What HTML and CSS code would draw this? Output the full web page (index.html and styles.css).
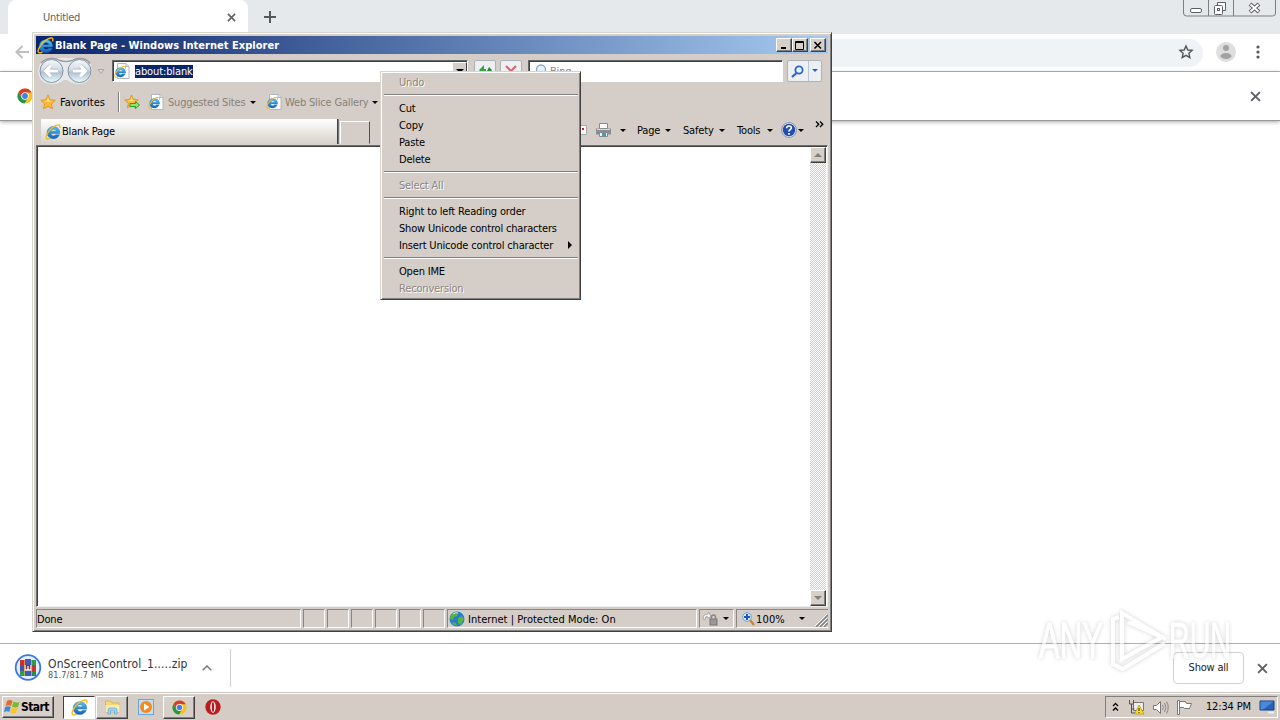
FILE: index.html
```html
<!DOCTYPE html>
<html lang="en">
<head>
    <meta charset="UTF-8">
    <meta name="viewport" content="width=device-width, initial-scale=1.0">
    <title>Untitled</title>
    <link rel="stylesheet" href="styles.css">
</head>
<body>
    <!-- shared icons -->
    <svg class="defs" width="0" height="0">
        <defs>
            <linearGradient id="blueE" x1="0" y1="0" x2="0" y2="1">
                <stop offset="0" stop-color="#5cc4f4"/><stop offset="1" stop-color="#0a62bc"/>
            </linearGradient>
            <linearGradient id="orb" x1="0" y1="0" x2="0" y2="1">
                <stop offset="0" stop-color="#f6f8fa"/><stop offset=".45" stop-color="#d3dce5"/>
                <stop offset=".55" stop-color="#b3c2cf"/><stop offset="1" stop-color="#e6fbff"/>
            </linearGradient>
            <symbol id="ie" viewBox="0 0 16 16">
                <path d="M14.800 9.500H6c.2 1.500 1.200 2.300 2.600 2.300 1 0 1.800-.4 2.300-1.100h3.500c-1 2.500-3.100 4-5.900 4-3.800 0-6.400-2.600-6.400-6.100s2.600-6.100 6.400-6.100c3.900 0 6.500 2.700 6.300 7zM6 7.200h5.200C10.900 6 10 5.300 8.600 5.300S6.300 6 6 7.200z" fill="url(#blueE)" stroke="#1768b0" stroke-width=".4"/>
                <path d="M14.600 4.200c.9-2.200.3-3.500-1.500-3.300-2.800.3-6.800 3.200-9.600 7-2.400 3.300-3.200 6.200-1.700 6.900.9.400 2.100.1 3.300-.6" fill="none" stroke="#f3b91f" stroke-width="1.300"/>
            </symbol>
            <symbol id="iepage" viewBox="0 0 16 16">
                <path d="M3.500.5h8.500l3 3v12H3.500z" fill="#fff" stroke="#b1b5bd"/>
                <path d="M12 .5v3h3" fill="#dde3ea" stroke="#b1b5bd"/>
                <use href="#ie" x="0" y="2.500" width="12.500" height="12.500"/>
            </symbol>
            <symbol id="star" viewBox="0 0 16 16">
                <path d="M8 1l2.100 4.700 5.100.6-3.800 3.500 1 5L8 12.300l-4.400 2.500 1-5L.8 6.300l5.100-.6z" fill="#fdb934" stroke="#de9322" stroke-width=".9"/>
                <path d="M8 3l1.200 3.600 3 .5L8 8 4 7l3-.5z" fill="#ffe08a"/>
            </symbol>
            <symbol id="chrome" viewBox="0 0 16 16">
                <circle cx="8" cy="8" r="7.500" fill="#fbc116"/>
                <path d="M1.500 4.200A7.500 7.500 0 0 1 14.700 4.600H8L4.900 9.600z" fill="#dd3d2f"/>
                <path d="M1.500 4.200A7.500 7.500 0 0 0 7.400 15.500L11 9.800 8 11.500 4.900 9.800z" fill="#24964e"/>
                <circle cx="8" cy="8" r="3.700" fill="#fff"/><circle cx="8" cy="8" r="2.900" fill="#4480df"/>
            </symbol>
            <symbol id="x" viewBox="0 0 10 10"><path d="M1 1l8 8M9 1l-8 8" fill="none" stroke="#5f6368" stroke-width="1.800"/></symbol>
        </defs>
    </svg>

    <div class="chrome">
        <div class="tabstrip">
            <div class="tab">
                <span>Untitled</span>
                <svg width="9" height="9"><use href="#x"/></svg>
            </div>
            <svg class="plus" width="12" height="12" viewBox="0 0 12 12"><path d="M6 0v12M0 6h12" stroke="#55595d" stroke-width="2"/></svg>
            <svg class="winctl" width="94" height="17" viewBox="0 0 94 17">
                <path d="M.5 0v13q0 3 3 3h86q3 0 3-3V0M25.500 0v16M50.500 0v16" fill="none" stroke="#7b7f83"/>
                <rect x="7.500" y="8.500" width="11" height="4" rx="1.500" fill="#fff" stroke="#5c6064"/>
                <path d="M34.500 2.500h8v8h-8z" fill="#fff" stroke="#5c6064"/>
                <rect x="31.500" y="5.500" width="8" height="9" rx="1" fill="#fff" stroke="#5c6064"/>
                <rect x="34.500" y="8.500" width="2" height="2" fill="none" stroke="#5c6064"/>
                <path d="M67 4l9 8M76 4l-9 8" stroke="#5c6064" stroke-width="4"/><path d="M67.500 4.400l8 7.200M75.500 4.400l-8 7.200" stroke="#fff" stroke-width="2"/>
            </svg>
        </div>
        <div class="toolbar">
            <svg class="back" width="14" height="14" viewBox="0 0 14 14"><path d="M14 7H2M7.500 1L1.500 7l6 6" fill="none" stroke="#bcbec0" stroke-width="2"/></svg>
            <div class="omnibox">
                <svg width="16" height="16" viewBox="0 0 16 16"><path d="M8 2l1.800 4 4.300.4-3.200 2.900.9 4.300L8 11.400l-3.800 2.200.9-4.300L1.900 6.400 6.200 6z" fill="none" stroke="#505459" stroke-width="1.400"/></svg>
            </div>
            <svg class="avatar" width="20" height="20" viewBox="0 0 20 20"><circle cx="10" cy="10" r="10" fill="#dedede"/><circle cx="10" cy="6" r="3" fill="#a3a3a3"/><ellipse cx="10" cy="14" rx="5.500" ry="3" fill="#a3a3a3"/></svg>
            <svg class="dots" width="4" height="14" viewBox="0 0 4 14"><g fill="#55595d"><circle cx="2" cy="2" r="1.600"/><circle cx="2" cy="7" r="1.600"/><circle cx="2" cy="12" r="1.600"/></g></svg>
        </div>
        <div class="infobar">
            <svg width="16" height="16"><use href="#chrome"/></svg>
            <svg width="11" height="11"><use href="#x"/></svg>
        </div>
        <div class="page"></div>
        <div class="downloads">
            <svg class="zip" width="28" height="28" viewBox="0 0 28 28">
                <circle cx="14" cy="13.500" r="12.300" fill="#e5eefb" stroke="#3b78e7" stroke-width="1.800"/>
                <path d="M6 6h5v5H6z" fill="#cf2e35"/><path d="M11 5h6v6h-6z" fill="#4658b5"/><path d="M17 6h5v5h-5z" fill="#2e9d50"/>
                <path d="M6 11h16v6H6z" fill="#773041"/><path d="M6 17h5v5H6z" fill="#2e9d50"/><path d="M11 17h6v5h-6z" fill="#4658b5"/><path d="M17 17h5v5h-5z" fill="#218d48"/>
                <path d="M6 11h4v6H6z" fill="#4054b5"/><path d="M18 11h4v6h-4z" fill="#c93433"/>
                <path d="M11 11v5h6v-5M14 12v4" stroke="#fff" stroke-width="1.300" fill="none"/>
                <path d="M10.500 6v16M17.500 6v16" stroke="#e1bc51" stroke-width=".7"/>
            </svg>
            <div class="file"><span class="name">OnScreenControl_1.....zip</span><span class="size">81.7/81.7 MB</span></div>
            <svg class="expand" width="10" height="6" viewBox="0 0 10 6"><path d="M.7 5.300L5 1l4.300 4.300" fill="none" stroke="#777" stroke-width="1.500"/></svg>
            <div class="split"></div>
            <button>Show all</button>
            <svg class="close" width="11" height="11"><use href="#x"/></svg>
        </div>
    </div>

    <div class="taskbar">
        <div class="start">
            <svg width="17" height="16" viewBox="0 0 17 16"><path d="M3 2q3-2 5.500 0L7 7Q4 5.500 1.500 7z" fill="#ea6825"/><path d="M9.500 2.500q3 2 6 .2L14 8q-3 1-6-.5z" fill="#79b92b"/><path d="M1.200 8Q4 6.500 6.700 8L5.200 13Q3 11.500 0 13z" fill="#3b8bd8"/><path d="M7.700 8.500q3 1.500 6 .5L12 14q-3 1-6-.8z" fill="#fac526"/></svg>
            <b>Start</b>
        </div>
        <div class="task pressed"><svg width="17" height="17"><use href="#ie"/></svg></div>
        <div class="task raised">
            <svg width="17" height="16" viewBox="0 0 17 16"><path d="M1.500 2h5l1.500 2h7v9h-13.500z" fill="#f4d979" stroke="#d9b548"/><path d="M1.500 6h14v7h-14z" fill="#fcebac"/><path d="M4 15v-4q0-2 2-2h5q2 0 2 2v4h-2.500v-3h-4v3z" fill="#9ed2f2" stroke="#5ba7d8" stroke-width=".7"/></svg>
        </div>
        <div class="task flat">
            <svg width="16" height="16" viewBox="0 0 16 16"><rect x=".5" y=".5" width="15" height="15" fill="#c4ddf5" stroke="#68a5dd"/><circle cx="8" cy="8" r="6" fill="#f28b18"/><path d="M6 4.500v7L11.500 8z" fill="#fff"/></svg>
        </div>
        <div class="task raised"><svg width="15" height="15"><use href="#chrome"/></svg></div>
        <div class="task opera">
            <svg width="16" height="16" viewBox="0 0 16 16"><circle cx="8" cy="8" r="7.700" fill="#ba1c20"/><ellipse cx="8" cy="8" rx="2.700" ry="5.800" fill="#fff"/><ellipse cx="8" cy="8" rx="1.200" ry="5" fill="#b11a1d"/></svg>
        </div>
        <div class="tray">
            <svg width="7" height="10" viewBox="0 0 7 10"><path d="M1 4l2.500-2.500L6 4M1 8.500L3.500 6 6 8.500" fill="none" stroke="#000" stroke-width="1.300"/></svg>
            <svg class="net" width="17" height="16" viewBox="0 0 17 16"><path d="M5.500 3.500h10v8h-10z" fill="#eee" stroke="#777"/><path d="M1.500 1v4h4V1M3.500 5v9h5M3.500 10h3" fill="none" stroke="#555"/><path d="M11 6l5 9H6.500z" fill="#ffe01b" stroke="#ad9600" stroke-width=".7"/><path d="M11 9v3M11 13v1" stroke="#222"/></svg>
            <svg class="sound" width="17" height="15" viewBox="0 0 17 15"><path d="M1.500 5.500h3l4-4v12l-4-4h-3z" fill="#fff" stroke="#777"/><path d="M10.500 5q2 2.500 0 5M12.500 3q3 4.500 0 9M14.500 1.500q3.500 6 0 12" fill="none" stroke="#888"/></svg>
            <svg class="flag" width="17" height="15" viewBox="0 0 17 15"><path d="M1.500.5h2v14h-2z" fill="#fff" stroke="#777"/><path d="M3.500 1.500h6l1 2h5l-2 5h-5l-1-1h-4z" fill="#fff" stroke="#777"/></svg>
            <span>12:34 PM</span>
            <svg class="desk" width="16" height="14" viewBox="0 0 16 14"><path d="M1 1h14v9H1z" fill="#2762bb" stroke="#123e86"/><path d="M1.500 1.500h13L4 9.500H1.500z" fill="#4a89d8"/><path d="M9 12.500h6" stroke="#e7eef8" stroke-width="2"/></svg>
        </div>
    </div>

    <div class="window">
        <div class="titlebar">
            <svg width="17" height="17"><use href="#ie"/></svg>
            <b>Blank Page - Windows Internet Explorer</b>
            <div class="ctl"><svg width="10" height="9"><path d="M2 7h5" stroke="#000" stroke-width="2"/></svg></div>
            <div class="ctl"><svg width="10" height="9"><path d="M.5.500h8v8h-8zM0 1.500h9" fill="none" stroke="#000"/></svg></div>
            <div class="ctl last"><svg width="10" height="9"><path d="M1.500 1l6.500 6.500M8 1L1.500 7.500" stroke="#000" stroke-width="1.600"/></svg></div>
        </div>
        <div class="address">
            <svg class="nav" width="70" height="28" viewBox="0 0 70 28">
                <path d="M3 7Q7 1 15 1h29q7 0 10 6l1 7q-2 13-13 13-7 0-12-4h-3q-5 4-12 4Q2 27 1 14z" fill="#e6e8ec"/>
                <path d="M4 6Q8 1.500 15 1.500q5 0 8 2 6 2 12 0 3-2 8-2 7 0 10 5" fill="none" stroke="#9a9da3" stroke-width="1.500"/>
                <circle cx="14.500" cy="14" r="11.500" fill="url(#orb)" stroke="#8593a1"/><circle cx="42.500" cy="14" r="11.500" fill="url(#orb)" stroke="#8593a1"/>
                <path d="M21 14H10M14 8.500L8.500 14l5.500 5.500" fill="none" stroke="#a3b1be" stroke-width="4.400"/><path d="M21 14H10M14 8.500L8.500 14l5.500 5.500" fill="none" stroke="#fff" stroke-width="3.200"/>
                <path d="M36 14h11M43 8.500l5.500 5.500-5.500 5.500" fill="none" stroke="#a3b1be" stroke-width="4.400"/><path d="M36 14h11M43 8.500l5.500 5.500-5.500 5.500" fill="none" stroke="#fff" stroke-width="3.200"/>
                <path d="M61 12.500h6l-3 4z" fill="#d9d5cf" stroke="#aaa6a0"/>
            </svg>
            <div class="field url">
                <svg width="16" height="16"><use href="#iepage"/></svg>
                <span class="selected">about:blank</span>
                <div class="drop"><i class="arrow"></i></div>
            </div>
            <div class="glass"><svg width="17" height="16" viewBox="0 0 17 16"><path d="M2 7l5-5v4h2v4H7v3z" fill="#35a43e"/><path d="M15 7l-3-3-2 4h2v5z" fill="#258d32"/></svg></div>
            <div class="glass"><svg width="12" height="12" viewBox="0 0 12 12"><path d="M1 1l10 10M11 1L1 11" stroke="#db6671" stroke-width="2.200"/></svg></div>
            <div class="field search">
                <svg width="15" height="15" viewBox="0 0 15 15"><circle cx="8" cy="5.500" r="4.500" fill="#e4f1fb" stroke="#83a9cc" stroke-width="1.300"/><path d="M5 9l-4 5" stroke="#83a9cc" stroke-width="2"/></svg>
                <span>Bing</span>
            </div>
            <div class="go">
                <svg width="13" height="13" viewBox="0 0 13 13"><circle cx="8" cy="5" r="3.600" fill="#eaf5ff" stroke="#2764d2" stroke-width="1.800"/><path d="M5.500 8L1 12" stroke="#2764d2" stroke-width="2.200"/></svg>
                <div><i class="arrow blue"></i></div>
            </div>
        </div>
        <div class="favorites">
            <svg width="16" height="16"><use href="#star"/></svg>
            <span class="fav">Favorites</span>
            <div class="groove"></div>
            <svg class="addfav" width="18" height="16" viewBox="0 0 18 16"><use href="#star" width="15" height="15"/><path d="M6 9.500h5.500V7.500l4 3.500-4 3.500v-2H6z" fill="#8fe860" stroke="#2d9a2d"/></svg>
            <svg class="sug" width="16" height="16"><use href="#iepage"/></svg>
            <span class="muted suggested">Suggested Sites</span><i class="arrow"></i>
            <svg class="slice" width="16" height="16"><use href="#iepage"/></svg>
            <span class="muted gallery">Web Slice Gallery</span><i class="arrow"></i>
        </div>
        <div class="tabs">
            <div class="ietab"><svg width="16" height="16"><use href="#ie"/></svg><span>Blank Page</span></div>
            <div class="newtab"></div>
            <div class="commands">
                <svg class="mail" width="16" height="12" viewBox="0 0 16 12"><path d="M.5 1.500h15v9H.5z" fill="#f9f6f4" stroke="#aaa"/><path d="M11 4h2v2h-2z" fill="#c24"/></svg>
                <svg class="print" width="17" height="16" viewBox="0 0 17 16"><path d="M4.500 1.500h8v5h-8z" fill="#fff" stroke="#888"/><path d="M1 6.500h15v6H1z" fill="#8b8d91"/><path d="M2 7.500h13" stroke="#d9d9d9"/><path d="M4.500 10.500h8v4h-8z" fill="#eef7ff" stroke="#888"/><path d="M7 11h4v3H7z" fill="#38a0c1"/></svg>
                <i class="arrow a1"></i>
                <span class="c-page">Page</span><i class="arrow a2"></i>
                <span class="c-safety">Safety</span><i class="arrow a3"></i>
                <span class="c-tools">Tools</span><i class="arrow a4"></i>
                <svg width="16" height="16" viewBox="0 0 16 16"><circle cx="8" cy="8" r="7.500" fill="#d8deea" stroke="#8c98b0"/><circle cx="8" cy="8" r="6.200" fill="#234fac"/><path d="M5.700 6.300Q5.700 4 8 4t2.300 2Q10.300 7 9 7.800 8 8.500 8 9.500M8 11v1.700" fill="none" stroke="#fff" stroke-width="1.700"/></svg>
                <i class="arrow a5"></i>
                <svg class="more" width="9" height="7" viewBox="0 0 9 7"><path d="M1 .5L3.800 3.200 1 6M5 .5l2.800 2.700L5 6" fill="none" stroke="#000" stroke-width="1.300"/></svg>
            </div>
        </div>
        <div class="view">
            <div class="scrollbar"><div class="sb up"><i></i></div><div class="sb down"><i></i></div></div>
        </div>
        <div class="status">
            <div class="panel done"><span>Done</span></div>
            <div class="panel"></div><div class="panel"></div><div class="panel"></div><div class="panel"></div><div class="panel"></div><div class="panel"></div>
            <div class="panel zone">
                <svg width="16" height="16" viewBox="0 0 16 16"><circle cx="8" cy="8" r="7.500" fill="#287bcd"/><path d="M4 2q4-2 5 0L8 5 5 6 4 9 1 8q0-4 3-6zM9 7l4-2 2 3-3 6-3-2zM4 11l3 1 1 3q-3 0-5-3z" fill="#53b44a"/><path d="M4 3q3-2 5-1" stroke="#c6edfc" fill="none"/></svg>
                <span>Internet | Protected Mode: On</span>
            </div>
            <div class="panel privacy">
                <svg width="17" height="15" viewBox="0 0 17 15"><path d="M1 8Q1 3 6 3l1-2 2 5-4 1V5Q3 5 3 9z" fill="#f4f4f4" stroke="#aaa"/><rect x="8" y="8" width="7" height="6" fill="#999" stroke="#777"/><path d="M9.500 8V6q0-2 2-2t2 2v2" fill="none" stroke="#888" stroke-width="1.500"/></svg>
                <i class="arrow"></i>
            </div>
            <div class="panel zoom">
                <svg width="13" height="14" viewBox="0 0 13 14"><path d="M8 8l4 5" stroke="#c78643" stroke-width="2.500"/><circle cx="5" cy="5" r="4.300" fill="#d9ecfc" stroke="#6ca0d5"/><path d="M5 2v6M2 5h6" stroke="#1b58b8" stroke-width="2"/></svg>
                <span>100%</span><i class="arrow"></i>
                <svg class="grip" width="13" height="13" viewBox="0 0 13 13"><path d="M1 13L13 1M5 13l8-8M9 13l4-4" stroke="#808080" stroke-width="1.500"/><path d="M0 12L12 0M4 12l8-8M8 12l4-4" stroke="#fff"/></svg>
            </div>
        </div>
    </div>

    <div class="menu">
        <div class="item off"><span>Undo</span></div>
        <hr>
        <div class="item"><span>Cut</span></div>
        <div class="item"><span>Copy</span></div>
        <div class="item"><span>Paste</span></div>
        <div class="item"><span>Delete</span></div>
        <hr>
        <div class="item off"><span>Select All</span></div>
        <hr>
        <div class="item"><span>Right to left Reading order</span></div>
        <div class="item"><span>Show Unicode control characters</span></div>
        <div class="item"><span>Insert Unicode control character</span><i></i></div>
        <hr>
        <div class="item"><span>Open IME</span></div>
        <div class="item off"><span>Reconversion</span></div>
    </div>

    <svg class="watermark" width="204" height="80" viewBox="0 0 204 80">
        <text x="4" y="58" textLength="64" lengthAdjust="spacingAndGlyphs">ANY</text>
        <path d="M84 17l-6 2v45l10 5 42-26M87 13v46l40-22zM93 22l38 17" fill="none"/>
        <text x="134" y="58" textLength="62" lengthAdjust="spacingAndGlyphs">RUN</text>
    </svg>
</body>
</html>
```
FILE: styles.css
```css
* {
    box-sizing: border-box;
}
body {
    margin: 0;
    width: 1280px;
    height: 720px;
    overflow: hidden;
    position: relative;
    background: #fff;
    font-family: "DejaVu Sans Condensed", "DejaVu Sans", sans-serif;
    font-stretch: condensed;
    font-size: 11px;
    line-height: 14px;
    letter-spacing: -0.17px;
    color: #000;
    white-space: nowrap;
}
svg {
    display: block;
    flex: none;
}
.defs {
    position: absolute;
}
.arrow {
    flex: none;
    border: 3px solid transparent;
    border-top-color: #000;
    border-bottom: 0;
}
.arrow.blue {
    display: block;
    border-top-color: #2764b8;
}

/* browser behind */
.chrome {
    height: 692px;
    display: flex;
    flex-direction: column;
}
.tabstrip {
    height: 34px;
    background: #e5e9ec;
    display: flex;
    align-items: flex-start;
    padding-left: 8px;
}
.tab {
    width: 240px;
    height: 34px;
    background: #fff;
    border-radius: 8px 8px 0 0;
    display: flex;
    align-items: center;
    justify-content: space-between;
    padding: 0 12px 0 35px;
    color: #5f6368;
    letter-spacing: -0.25px;
}
.tab span {
    padding-top: 1px;
}
.plus {
    margin: 11px 0 0 16px;
}
.winctl {
    margin: 0 3px 0 auto;
}
.toolbar {
    height: 38px;
    border-bottom: 1px solid #b5b5b5;
    display: flex;
    align-items: center;
    padding: 0 20px 0 15px;
}
.toolbar svg {
    position: relative;
    top: -1px;
}
.omnibox {
    flex: 1;
    height: 28px;
    margin: 0 13px 0 90px;
    background: #f0f3f5;
    border-radius: 14px;
    display: flex;
    align-items: center;
    justify-content: flex-end;
    padding-right: 9px;
}
.dots {
    margin-left: 20px;
}
.infobar {
    height: 49px;
    border-bottom: 1px solid #999;
    box-shadow: 0 1px 4px rgba(0, 0, 0, 0.35);
    display: flex;
    align-items: center;
    justify-content: space-between;
    padding: 0 19px 0 17px;
}
.page {
    flex: 1;
}
.downloads {
    height: 49px;
    border-top: 1px solid #b0b0b0;
    display: flex;
    align-items: center;
    padding: 0 12px 0 14px;
}
.file {
    width: 140px;
    margin-left: 6px;
    padding-top: 1px;
    display: flex;
    flex-direction: column;
}
.file .name {
    font-size: 12px;
    line-height: 13px;
    color: #333;
    letter-spacing: 0.13px;
}
.file .size {
    font-size: 9px;
    line-height: 9px;
    color: #555;
    letter-spacing: 0.15px;
}
.expand {
    margin-left: 14px;
}
.split {
    width: 1px;
    height: 38px;
    margin-left: 18px;
    background: #ccc;
}
.downloads button {
    width: 71px;
    height: 32px;
    margin: 0 13px 0 auto;
    padding: 0 0 1px;
    background: #fff;
    border: 1px solid #d0d2d4;
    border-radius: 4px;
    font: inherit;
    letter-spacing: -0.2px;
    color: #222;
}

/* taskbar */
.taskbar {
    height: 28px;
    background: #d4ccc5;
    border-top: 1px solid #c7c3bd;
    box-shadow: inset 0 1px #fff;
    display: flex;
    align-items: center;
    padding: 1px 2px 0;
}
.start, .task.raised, .ctl, .sb {
    background: #d6d0c9;
    border: 1px solid;
    border-color: #fff #404040 #404040 #fff;
    box-shadow: inset -1px -1px #808080;
}
.start {
    width: 52px;
    height: 22px;
    display: flex;
    align-items: center;
    font-size: 12px;
    letter-spacing: -0.6px;
    padding-left: 1px;
}
.task {
    width: 32px;
    height: 23px;
    margin-left: 1px;
    display: flex;
    align-items: center;
    justify-content: center;
}
.task.flat {
    margin-left: 2px;
}
.task.pressed {
    width: 32px;
    margin-left: 9px;
    background: #fff;
    border: 1px solid;
    border-color: #404040 #fff #fff #404040;
}
.task.opera {
    margin-left: 2px;
}
.tray {
    width: 173px;
    height: 22px;
    margin-left: auto;
    border: 1px solid;
    border-color: #808080 #fff #fff #808080;
    display: flex;
    align-items: center;
    padding: 0 2px 0 6px;
}
.net {
    margin-left: 9px;
}
.sound {
    margin-left: 7px;
}
.flag {
    margin-left: 7px;
}
.tray span {
    margin-left: 13px;
    width: 50px;
}
.desk {
    margin-left: 4px;
}

/* foreground window */
.window {
    position: absolute;
    left: 32px;
    top: 32px;
    width: 800px;
    height: 600px;
    background: #d5cdc7;
    border: 1px solid;
    border-color: #d8d4cc #404040 #404040 #d8d4cc;
    box-shadow: inset 1px 1px #fff, inset -1px -1px #808080;
    padding: 3px;
    display: flex;
    flex-direction: column;
}
.titlebar {
    height: 18px;
    background: linear-gradient(90deg, #0a246a, #a6caf0);
    display: flex;
    align-items: center;
    padding: 0 2px 0 1px;
    color: #fff;
}
.titlebar b {
    margin-left: 1px;
    margin-right: auto;
    padding-top: 1px;
    letter-spacing: 0.04px;
}
.ctl {
    width: 16px;
    height: 14px;
    display: flex;
    align-items: center;
    justify-content: center;
}
.ctl.last {
    margin-left: 2px;
}
.address {
    height: 34px;
    display: flex;
    align-items: center;
    padding-left: 1px;
}
.field {
    height: 22px;
    background: #fff;
    border: 1px solid;
    border-color: #666 #fff #fff #666;
    box-shadow: inset 1px 1px #404040;
    display: flex;
    align-items: center;
}
.url {
    width: 356px;
    margin: 0 6px 0 5px;
    padding-left: 1px;
}
.selected {
    background: #0a246a;
    color: #fff;
    width: 58px;
    margin-left: 5px;
    line-height: 13px;
    letter-spacing: -0.12px;
}
.drop {
    width: 15px;
    height: 18px;
    margin-left: auto;
    background: #d5cdc7;
    border: 1px solid;
    border-color: #fff #404040 #404040 #fff;
    display: flex;
    align-items: center;
    justify-content: center;
}
.drop .arrow {
    border-width: 4px 4px 0;
}
.glass, .go {
    height: 22px;
    background: #edf0f3;
    border: 1px solid #adb2b8;
    border-radius: 2px;
    display: flex;
    align-items: center;
    justify-content: center;
}
.glass {
    width: 22px;
    margin-right: 4px;
}
.search {
    width: 255px;
    margin-left: 2px;
    padding-left: 4px;
    color: #888;
}
.search span {
    margin: 2px 0 0 2px;
}
.go {
    width: 35px;
    margin-left: 4px;
    justify-content: flex-start;
    padding-left: 3px;
}
.go div {
    height: 20px;
    margin-left: 4px;
    padding: 8px 3px 0;
    border-left: 1px solid #b6c5d8;
}
.favorites {
    height: 30px;
    display: flex;
    align-items: center;
    padding: 0 0 2px 4px;
}
.favorites span {
    padding-top: 2px;
}
.fav {
    width: 46px;
    margin-left: 4px;
    letter-spacing: 0.05px;
}
.groove {
    width: 2px;
    height: 20px;
    margin-left: 12px;
    border-left: 1px solid #808080;
    border-right: 1px solid #fff;
}
.addfav {
    margin-left: 4px;
}
.sug {
    margin-left: 6px;
}
.muted {
    color: #888279;
}
.suggested {
    width: 78px;
    margin: 0 4px;
}
.slice {
    margin-left: 10px;
}
.gallery {
    width: 83px;
    margin: 0 4px 0 3px;
}
.tabs {
    height: 27px;
    display: flex;
    align-items: flex-end;
    padding: 0 1px 1px 5px;
}
.ietab {
    width: 297px;
    height: 25px;
    background: linear-gradient(#fff, #d8d2c9);
    border-right: 1px solid #404040;
    box-shadow: 1px 0 #777;
    display: flex;
    align-items: center;
    padding-left: 4px;
}
.ietab span {
    margin-left: 1px;
    padding-top: 1px;
}
.newtab {
    width: 30px;
    height: 23px;
    margin-left: 2px;
    border: 1px solid;
    border-color: #fff #505050 transparent #fff;
}
.commands {
    display: flex;
    align-items: center;
    height: 28px;
    margin: 0 1px 0 auto;
}
.commands span {
    padding-top: 1px;
}
.print {
    margin: 0 8px;
}
.c-page {
    width: 24px;
    margin: 0 4px 0 11px;
}
.c-safety {
    width: 33px;
    margin: 0 3px 0 12px;
}
.c-tools {
    width: 26px;
    margin: 0 4px 0 12px;
}
.a4 {
    margin-right: 8px;
}
.a5 {
    margin-left: 1px;
}
.more {
    margin: 0 2px 12px 11px;
}
.view {
    flex: 1;
    background: #fff;
    border: 1px solid;
    border-color: #707070 #eee #eee #707070;
    box-shadow: inset 1px 1px #404040;
    padding: 1px 1px 0 1px;
    display: flex;
    justify-content: flex-end;
}
.scrollbar {
    width: 16px;
    background: repeating-conic-gradient(#fff 0 25%, #d5cdc7 0 50%) 0 0 / 2px 2px;
    display: flex;
    flex-direction: column;
    justify-content: space-between;
}
.sb {
    height: 16px;
    display: flex;
    align-items: center;
    justify-content: center;
}
.sb i {
    border: 4px solid transparent;
}
.sb.up i {
    border-top: 0;
    border-bottom-color: #808080;
}
.sb.down i {
    border-bottom: 0;
    border-top-color: #808080;
}
.status {
    height: 21px;
    padding-top: 2px;
    display: flex;
    gap: 2px;
}
.panel {
    width: 22px;
    height: 19px;
    border: 1px solid;
    border-color: #8a857f #fff #fff #8a857f;
    display: flex;
    align-items: center;
}
.panel span {
    padding-top: 2px;
}
.panel.done {
    width: 265px;
}
.panel.zone {
    width: 250px;
    padding-left: 1px;
}
.zone span {
    margin-left: 3px;
    letter-spacing: 0.03px;
}
.panel.privacy {
    width: 35px;
    padding-left: 2px;
}
.privacy .arrow {
    margin-left: 4px;
}
.panel.zoom {
    width: 92px;
    padding-left: 5px;
    border-right: 0;
}
.zoom span {
    width: 30px;
    margin-left: 1px;
    letter-spacing: 0.15px;
}
.zoom .arrow {
    margin-left: 13px;
}
.grip {
    margin: 4px 0 0 auto;
}

/* context menu */
.menu {
    position: absolute;
    left: 380px;
    top: 71px;
    width: 201px;
    height: 229px;
    background: #d5cdc7;
    border: 1px solid;
    border-color: #d8d4cc #404040 #404040 #d8d4cc;
    box-shadow: inset 1px 1px #fff, inset -1px -1px #808080;
    padding: 2px;
}
.item {
    height: 17px;
    padding: 1px 6px 0 16px;
    display: flex;
    align-items: center;
    justify-content: space-between;
}
.item i {
    border: 4px solid transparent;
    border-left-color: #000;
    border-right: 0;
    margin-top: -2px;
}
.off {
    color: #8b867f;
    text-shadow: 1px 1px #fff;
}
.menu hr {
    height: 2px;
    margin: 3px 0 4px 1px;
    border: 0;
    border-top: 1px solid #808080;
    border-bottom: 1px solid #fff;
}

.watermark {
    position: absolute;
    left: 1035px;
    top: 600px;
    filter: drop-shadow(0 0 2px rgba(0, 0, 0, 0.3));
    opacity: 0.6;
}
.watermark text {
    font-family: "Liberation Sans", sans-serif;
    font-size: 50px;
    letter-spacing: 0;
    fill: #fff;
    stroke: #fff;
    stroke-width: 1;
}
.watermark path {
    stroke: #fff;
    stroke-width: 4;
}
```
